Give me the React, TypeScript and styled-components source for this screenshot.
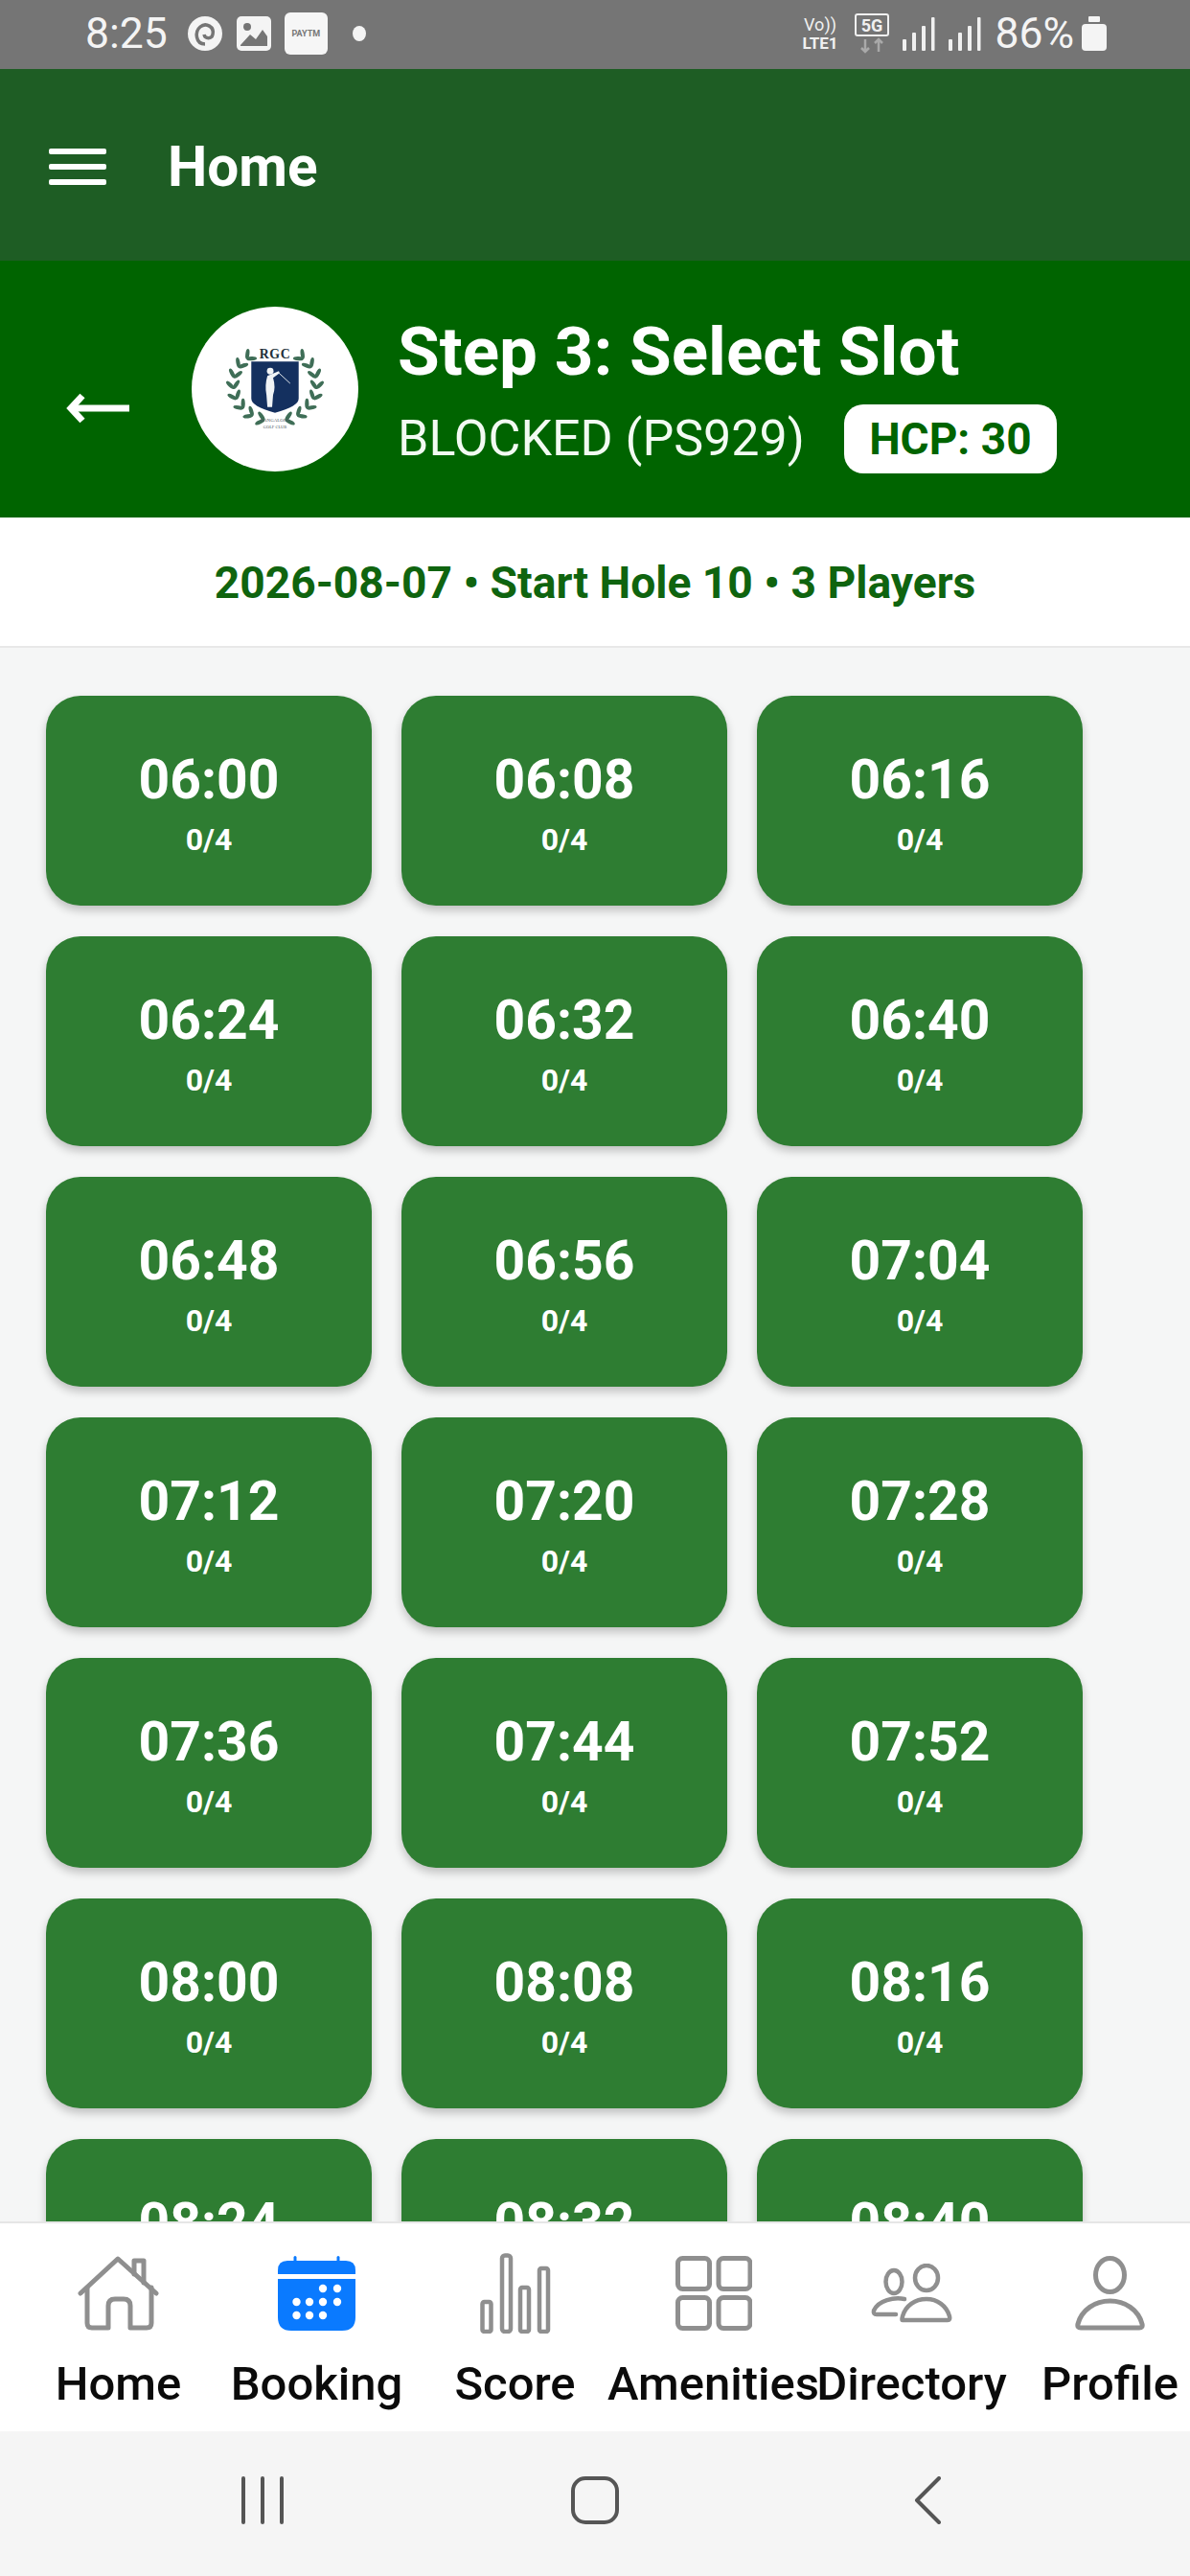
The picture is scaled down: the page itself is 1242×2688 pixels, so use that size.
import styled, { createGlobalStyle } from 'styled-components'

const GlobalStyle = createGlobalStyle`
  html, body {
    margin: 0;
    padding: 0;
    background: #f5f6f6;
    font-family: Roboto, "Liberation Sans", sans-serif;
  }
  * {
    box-sizing: border-box;
  }
`

const Screen = styled.div`
  width: 1242px;
  height: 2688px;
  display: flex;
  flex-direction: column;
  overflow: hidden;
`

const StatusBar = styled.div`
  height: 72px;
  flex: none;
  background: #757575;
  color: #f4f4f4;
  display: flex;
  align-items: center;
  justify-content: space-between;
  padding: 0 87px 2px 89px;
`

const StatusGroup = styled.div`
  display: flex;
  align-items: center;
  gap: 14px;
`

const StatusText = styled.span`
  font-size: 44.5px;
  line-height: 1;
`

const SpiralIcon = styled.svg`
  margin-left: 6px;
`

const BatteryIcon = styled.svg`
  margin-left: -6px;
`

const PaytmBadge = styled.span`
  width: 45px;
  height: 44px;
  background: #f6f6f6;
  border-radius: 6px;
  color: #777;
  font-size: 9px;
  font-weight: 700;
  display: flex;
  align-items: center;
  justify-content: center;
`

const StatusDot = styled.span`
  width: 14px;
  height: 16px;
  margin-left: 12px;
  border-radius: 50%;
  background: #f4f4f4;
`

const AppBar = styled.header`
  height: 200px;
  flex: none;
  background: #1e5d24;
  color: #fff;
  display: flex;
  align-items: center;
  padding: 4px 0 0 51px;
  gap: 64px;
`

const Hamburger = styled.div`
  width: 60px;
  display: flex;
  flex-direction: column;
  gap: 10px;
  span {
    height: 6px;
    border-radius: 2px;
    background: #fff;
  }
`

const AppTitle = styled.h1`
  margin: 0;
  font-size: 58.5px;
  font-weight: 700;
  line-height: 1;
`

const StepHeader = styled.section`
  height: 268px;
  flex: none;
  background: #006400;
  color: #fff;
  display: flex;
  align-items: center;
  padding-left: 69px;
`

const BackArrow = styled.svg`
  width: 66px;
  height: 32px;
  margin: 40px 65px 0 0;
  flex: none;
`

const LogoCircle = styled.div`
  width: 174px;
  height: 172px;
  flex: none;
  margin-right: 41px;
  border-radius: 50%;
  background: #fff;
  display: flex;
`

const StepText = styled.div`
  display: flex;
  flex-direction: column;
  gap: 16px;
  margin-top: 9px;
`

const StepTitle = styled.h2`
  margin: 0;
  font-size: 71px;
  font-weight: 700;
  line-height: 78px;
`

const StepMeta = styled.div`
  display: flex;
  align-items: center;
  gap: 41px;
`

const MemberName = styled.span`
  font-size: 52px;
  line-height: 1;
  color: #f2fbf2;
`

const HcpPill = styled.span`
  width: 222px;
  height: 72px;
  border-radius: 20px;
  background: #fff;
  color: #006400;
  font-size: 46px;
  font-weight: 700;
  display: flex;
  align-items: center;
  justify-content: center;
`

const SummaryRow = styled.div`
  height: 136px;
  flex: none;
  background: #fff;
  border-bottom: 2px solid #e8e8e8;
  padding-top: 2px;
  color: #0f640f;
  font-size: 46.2px;
  font-weight: 700;
  display: flex;
  align-items: center;
  justify-content: center;
`

const SlotArea = styled.main`
  flex: 1;
  min-height: 0;
  overflow: hidden;
  background: #f5f6f6;
  padding: 50px 0 0 48px;
`

const SlotGrid = styled.div`
  display: grid;
  grid-template-columns: repeat(3, 340px);
  grid-auto-rows: 219px;
  column-gap: 31px;
  row-gap: 32px;
`

const SlotCard = styled.button`
  border: 0;
  padding: 5px 0 0;
  border-radius: 36px;
  background: #2e7d32;
  color: #fff;
  font-family: inherit;
  box-shadow: 0 5px 10px rgba(0, 0, 0, 0.22);
  display: flex;
  flex-direction: column;
  align-items: center;
  justify-content: center;
`

const SlotTime = styled.span`
  font-size: 57px;
  font-weight: 700;
  line-height: 66px;
`

const SlotCount = styled.span`
  margin-top: 10px;
  font-size: 32px;
  font-weight: 700;
  line-height: 38px;
`

const TabBar = styled.nav`
  height: 219px;
  flex: none;
  background: #fff;
  border-top: 2px solid #e6e6e6;
  padding-left: 20px;
  display: grid;
  grid-template-columns: repeat(6, 207px);
`

const Tab = styled.div`
  display: flex;
  flex-direction: column;
  align-items: center;
`

const TabIconSlot = styled.div`
  height: 116px;
  display: flex;
  align-items: center;
  justify-content: center;
  margin-top: 15px;
`

const TabLabel = styled.span`
  margin-top: 10px;
  font-size: 49px;
  font-weight: 500;
  line-height: 54px;
  color: #0b0b0b;
  white-space: nowrap;
`

const SystemBar = styled.div`
  height: 151px;
  flex: none;
  background: #f5f5f5;
  display: grid;
  grid-template-columns: repeat(3, 347px);
  justify-content: center;
  align-items: center;
  justify-items: center;
  padding-bottom: 7px;
`

const times = [
  '06:00', '06:08', '06:16', '06:24', '06:32', '06:40', '06:48',
  '06:56', '07:04', '07:12', '07:20', '07:28', '07:36', '07:44',
  '07:52', '08:00', '08:08', '08:16', '08:24', '08:32', '08:40',
]

const GRAY = '#8f8f8f'

const leafSteps = [0, 1, 2, 3, 4, 5, 6, 7]

// left branch of the wreath, mirrored for the right one
const WreathSide = ({ flip }: { flip?: boolean }) => (
  <g transform={flip ? 'translate(176 0) scale(-1 1)' : undefined} fill="#3f6e57">
    {leafSteps.map(i => {
      const deg = 255 - i * 17.5
      const a = (deg * Math.PI) / 180
      const x = 88 + 44 * Math.cos(a)
      const y = 82 - 38 * Math.sin(a)
      const forward = 90 - deg
      return (
        <g key={i} transform={`translate(${x.toFixed(1)} ${y.toFixed(1)})`}>
          <ellipse cx="5" rx="5.5" ry="2.1" transform={`rotate(${forward + 40})`} />
          <ellipse cx="5" rx="5.5" ry="2.1" transform={`rotate(${forward - 40})`} />
        </g>
      )
    })}
  </g>
)

const Logo = () => (
  <svg width="174" height="172" viewBox="0 0 176 172">
    <WreathSide />
    <WreathSide flip />
    <path d="M63 57 H113 V96 Q113 104 88 111 Q63 104 63 96 Z" fill="#14305f" />
    <g fill="#f1f4f6">
      <circle cx="83" cy="67" r="3.5" />
      <path d="M80 72 L92 67 L93 69 L86 74 Q89 84 86 92 L85 105 H80 L79 92 Q77 82 80 72 Z" />
    </g>
    <path d="M91 68 L104 80" stroke="#dfe5ea" strokeWidth="1" />
    <text x="88" y="54" textAnchor="middle" fontFamily="Liberation Serif, serif" fontWeight="700" fontSize="14" letterSpacing="0.6" fill="#22303a">RGC</text>
    <text x="88" y="120" textAnchor="middle" fontFamily="Liberation Serif, serif" fontSize="5" fill="#4a5560">BANGALORE</text>
    <text x="88" y="127" textAnchor="middle" fontFamily="Liberation Serif, serif" fontSize="4.5" fill="#4a5560">GOLF CLUB</text>
  </svg>
)

const SignalIcon = () => (
  <svg width="34" height="36" viewBox="0 0 34 36" fill="#f0f0f0">
    <rect x="0" y="24" width="4" height="12" rx="1" />
    <rect x="10" y="17" width="4" height="19" rx="1" />
    <rect x="20" y="10" width="4" height="26" rx="1" />
    <rect x="30" y="1" width="3.5" height="35" rx="1" />
  </svg>
)

const HomeIcon = () => (
  <svg width="85" height="78" viewBox="0 0 85 78" fill="none" stroke={GRAY} strokeWidth="5" strokeLinejoin="round" strokeLinecap="round">
    <path d="M3 39 L42 3 L82 39" />
    <path d="M10 33 V70 q0 5 5 5 H32 V52 q0-7 7-7 h9 q7 0 7 7 V75 H72 q5 0 5-5 V33" />
    <path d="M59 19 V5 H69 V28" />
  </svg>
)

const CalendarIcon = () => {
  const dots = [[62, 34], [47, 34], [19.5, 48], [33, 48], [47, 48], [62, 48], [19.5, 62], [33, 62], [47, 62]]
  return (
    <svg width="81" height="78" viewBox="0 0 81 78" fill="#0a7aff">
      <rect x="16.5" y="0" width="3" height="8" rx="1.5" />
      <rect x="61.5" y="0" width="3" height="8" rx="1.5" />
      <path d="M0 19 V15 Q0 5 10 5 H71 Q81 5 81 15 V19 Z" />
      <path d="M0 24 H81 V64 Q81 78 67 78 H14 Q0 78 0 64 Z" />
      {dots.map(([cx, cy]) => (
        <circle key={`${cx}-${cy}`} cx={cx} cy={cy} r="4.2" fill="#fff" />
      ))}
    </svg>
  )
}

const ScoreIcon = () => (
  <svg width="74" height="84" viewBox="0 0 74 84" fill="none" stroke={GRAY} strokeWidth="4.5" strokeLinejoin="round">
    <rect x="2.5" y="51" width="9" height="31" rx="2" />
    <rect x="23" y="2.5" width="9" height="79.5" rx="3" />
    <rect x="42" y="36" width="9" height="46" rx="2" />
    <rect x="62" y="16" width="9" height="66" rx="2" />
  </svg>
)

const AmenitiesIcon = () => (
  <svg width="80" height="78" viewBox="0 0 80 78" fill="none" stroke={GRAY} strokeWidth="5">
    <rect x="2.5" y="2.5" width="33" height="32" rx="5" />
    <rect x="45" y="2.5" width="33" height="32" rx="5" />
    <rect x="2.5" y="43.5" width="33" height="32" rx="5" />
    <rect x="45" y="43.5" width="33" height="32" rx="5" />
  </svg>
)

const DirectoryIcon = () => (
  <svg width="85" height="62" viewBox="0 0 85 62" fill="none" stroke={GRAY} strokeWidth="4.5" strokeLinejoin="round" strokeLinecap="round">
    <ellipse cx="24" cy="19" rx="8.5" ry="12" />
    <ellipse cx="58" cy="15" rx="12" ry="13" />
    <path d="M33 59 H80 Q83 59 82 55 C79 44 69 37 58 37 C46 37 36 44 33 55 Q32 59 33 59 Z" />
    <path d="M35 37 C24 35 8 38 3 49 Q2 53 6 53 H26" />
  </svg>
)

const ProfileIcon = () => (
  <svg width="73" height="78" viewBox="0 0 73 78" fill="none" stroke={GRAY} strokeWidth="5" strokeLinejoin="round">
    <ellipse cx="36.5" cy="20" rx="15" ry="17.5" />
    <path d="M6 75 H67 Q71 75 70 71 C66 56 52 47 36.5 47 C21 47 7 56 3 71 Q2 75 6 75 Z" />
  </svg>
)

const tabs = [
  { label: 'Home', icon: <HomeIcon /> },
  { label: 'Booking', icon: <CalendarIcon /> },
  { label: 'Score', icon: <ScoreIcon /> },
  { label: 'Amenities', icon: <AmenitiesIcon /> },
  { label: 'Directory', icon: <DirectoryIcon /> },
  { label: 'Profile', icon: <ProfileIcon /> },
]

const App = () => {
  return (
    <>
      <GlobalStyle />
      <Screen>
        <StatusBar>
          <StatusGroup>
            <StatusText>8:25</StatusText>
            <SpiralIcon width="38" height="36" viewBox="0 0 38 36">
              <circle cx="19" cy="18" r="18" fill="#f4f4f4" />
              <path d="M19 29 C9 29 8 16 14 11 C20 6 29 11 27 19 C26 24 19 24 18 19" fill="none" stroke="#757575" strokeWidth="3.5" />
            </SpiralIcon>
            <svg width="36" height="36" viewBox="0 0 36 36">
              <rect width="36" height="36" rx="5" fill="#f4f4f4" />
              <circle cx="11" cy="11" r="4" fill="#757575" />
              <path d="M4 30 L14 19 L20 24 L27 14 L32 21 V31 H4 Z" fill="#757575" />
            </svg>
            <PaytmBadge>PAYTM</PaytmBadge>
            <StatusDot />
          </StatusGroup>
          <StatusGroup>
            <svg width="44" height="38" viewBox="0 0 44 38" fill="#f0f0f0">
              <text x="22" y="16" textAnchor="middle" fontFamily="Roboto, sans-serif" fontSize="18">Vo))</text>
              <text x="22" y="35" textAnchor="middle" fontFamily="Roboto, sans-serif" fontWeight="700" fontSize="17">LTE1</text>
            </svg>
            <svg width="36" height="42" viewBox="0 0 36 42">
              <rect x="1" y="1" width="34" height="22" rx="2" fill="none" stroke="#f0f0f0" strokeWidth="2" />
              <text x="18" y="19" textAnchor="middle" fontFamily="Roboto, sans-serif" fontWeight="700" fontSize="18" fill="#f0f0f0">5G</text>
              <path d="M11 27 V40 M7 36 L11 40 L15 36" stroke="#a9a9a9" strokeWidth="2.5" fill="none" />
              <path d="M25 40 V27 M21 31 L25 27 L29 31" stroke="#a9a9a9" strokeWidth="2.5" fill="none" />
            </svg>
            <SignalIcon />
            <SignalIcon />
            <StatusText>86%</StatusText>
            <BatteryIcon width="26" height="36" viewBox="0 0 26 36" fill="#f4f4f4">
              <rect x="7" y="0" width="12" height="6" rx="1" />
              <rect x="0" y="8" width="26" height="28" rx="4" />
            </BatteryIcon>
          </StatusGroup>
        </StatusBar>

        <AppBar>
          <Hamburger>
            <span />
            <span />
            <span />
          </Hamburger>
          <AppTitle>Home</AppTitle>
        </AppBar>

        <StepHeader>
          <BackArrow viewBox="0 0 66 32" fill="none" stroke="#fff" strokeWidth="7">
            <path d="M66 16 H6" />
            <path d="M17 3 L5 16 L17 29" strokeLinejoin="miter" />
          </BackArrow>
          <LogoCircle>
            <Logo />
          </LogoCircle>
          <StepText>
            <StepTitle>Step 3: Select Slot</StepTitle>
            <StepMeta>
              <MemberName>BLOCKED (PS929)</MemberName>
              <HcpPill>HCP: 30</HcpPill>
            </StepMeta>
          </StepText>
        </StepHeader>

        <SummaryRow>2026-08-07 • Start Hole 10 • 3 Players</SummaryRow>

        <SlotArea>
          <SlotGrid>
            {times.map(t => (
              <SlotCard key={t}>
                <SlotTime>{t}</SlotTime>
                <SlotCount>0/4</SlotCount>
              </SlotCard>
            ))}
          </SlotGrid>
        </SlotArea>

        <TabBar>
          {tabs.map(tab => (
            <Tab key={tab.label}>
              <TabIconSlot>{tab.icon}</TabIconSlot>
              <TabLabel>{tab.label}</TabLabel>
            </Tab>
          ))}
        </TabBar>

        <SystemBar>
          <svg width="44" height="50" viewBox="0 0 44 50" stroke="#555" strokeWidth="4" strokeLinecap="round">
            <path d="M2 2 V48 M22 2 V48 M42 2 V48" />
          </svg>
          <svg width="50" height="50" viewBox="0 0 50 50" fill="none" stroke="#555" strokeWidth="4">
            <rect x="2" y="2" width="46" height="46" rx="13" />
          </svg>
          <svg width="28" height="50" viewBox="0 0 28 50" fill="none" stroke="#555" strokeWidth="4" strokeLinecap="round" strokeLinejoin="round">
            <path d="M26 2 L3 25 L26 48" />
          </svg>
        </SystemBar>
      </Screen>
    </>
  )
}

export default App
